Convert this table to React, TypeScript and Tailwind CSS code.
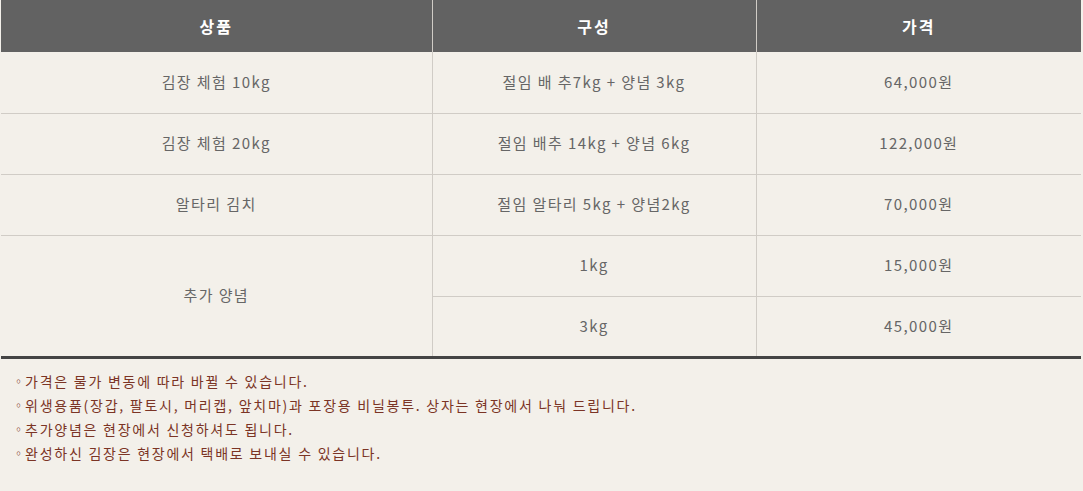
import React from "react";

const rows = [
  { name: "김장 체험 10kg", comp: "절임 배 추7kg + 양념 3kg", price: "64,000원" },
  { name: "김장 체험 20kg", comp: "절임 배추 14kg + 양념 6kg", price: "122,000원" },
  { name: "알타리 김치", comp: "절임 알타리 5kg + 양념2kg", price: "70,000원" },
];

const notes = [
  "가격은 물가 변동에 따라 바뀔 수 있습니다.",
  "위생용품(장갑, 팔토시, 머리캡, 앞치마)과 포장용 비닐봉투. 상자는 현장에서 나눠 드립니다.",
  "추가양념은 현장에서 신청하셔도 됩니다.",
  "완성하신 김장은 현장에서 택배로 보내실 수 있습니다.",
];

const App = () => {
  return (
    <div
      className="min-h-[491px] w-[1083px] bg-[#f3f0ea]"
      style={{ fontFamily: '"Malgun Gothic", "Noto Sans CJK KR", sans-serif' }}
    >
      <table className="ml-px w-[1080px] table-fixed border-collapse text-center text-[15px] tracking-[1.4px] text-[#666]">
        <colgroup>
          <col className="w-[431px]" />
          <col className="w-[324px]" />
          <col className="w-[325px]" />
        </colgroup>
        <thead>
          <tr className="h-[52px] bg-[#626262] text-[16px] font-bold tracking-[2px] text-white">
            <th className="border-r border-[#d0ccc6]">상품</th>
            <th className="border-r border-[#d0ccc6]">구성</th>
            <th>가격</th>
          </tr>
        </thead>
        <tbody className="border-b-[3px] border-[#444]">
          {rows.map((r) => (
            <tr key={r.name} className="h-[61px] border-b border-[#d0ccc6]">
              <td className="border-r border-[#d0ccc6]">{r.name}</td>
              <td className="border-r border-[#d0ccc6]">{r.comp}</td>
              <td>{r.price}</td>
            </tr>
          ))}
          <tr className="h-[61px] border-b border-[#d0ccc6]">
            <td rowSpan={2} className="border-r border-[#d0ccc6]">
              추가 양념
            </td>
            <td className="border-r border-[#d0ccc6]">1kg</td>
            <td>15,000원</td>
          </tr>
          <tr className="h-[61px]">
            <td className="border-r border-[#d0ccc6]">3kg</td>
            <td>45,000원</td>
          </tr>
        </tbody>
      </table>

      <ul className="pl-[13px] pt-[10px] text-[14px] leading-6 tracking-[1.75px] text-[#7b3425]">
        {notes.map((n) => (
          <li key={n} className="flex">
            <span className="mr-px text-[11px] tracking-normal">◦</span>
            <span>{n}</span>
          </li>
        ))}
      </ul>
    </div>
  );
};

export default App;
